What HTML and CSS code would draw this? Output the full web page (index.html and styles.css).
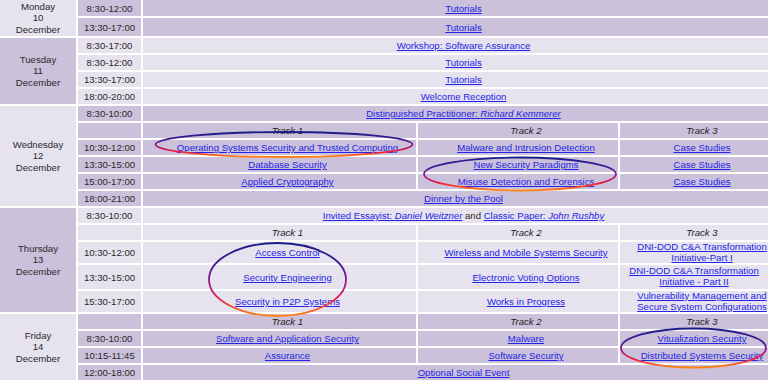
FILE: index.html
```html
<!DOCTYPE html>
<html>
<head>
<meta charset="utf-8">
<link rel="stylesheet" href="styles.css">
</head>
<body>
<div class="wrap">
  <div class="sched">
    <div class="cell day lt r-mon">Monday<br>10<br>December</div>
    <div class="cell time dk">8:30-12:00</div>
    <div class="cell full dk"><a href="#">Tutorials</a></div>
    <div class="cell time dk">13:30-17:00</div>
    <div class="cell full dk"><a href="#">Tutorials</a></div>

    <div class="cell day dk r-tue">Tuesday<br>11<br>December</div>
    <div class="cell time lt">8:30-17:00</div>
    <div class="cell full lt"><a href="#">Workshop: Software Assurance</a></div>
    <div class="cell time lt">8:30-12:00</div>
    <div class="cell full lt"><a href="#">Tutorials</a></div>
    <div class="cell time lt">13:30-17:00</div>
    <div class="cell full lt"><a href="#">Tutorials</a></div>
    <div class="cell time lt">18:00-20:00</div>
    <div class="cell full lt"><a href="#">Welcome Reception</a></div>

    <div class="cell day lt r-wed">Wednesday<br>12<br>December</div>
    <div class="cell time dk">8:30-10:00</div>
    <div class="cell full dk"><a href="#">Distinguished Practitioner: <i>Richard Kemmerer</i></a></div>
    <div class="cell time dk"></div>
    <div class="cell t1 dk track">Track 1</div>
    <div class="cell t2 dk track">Track 2</div>
    <div class="cell t3 dk track">Track 3</div>
    <div class="cell time dk">10:30-12:00</div>
    <div class="cell t1 dk"><a href="#">Operating Systems Security and Trusted Computing</a></div>
    <div class="cell t2 dk"><a href="#">Malware and Intrusion Detection</a></div>
    <div class="cell t3 dk"><a href="#">Case Studies</a></div>
    <div class="cell time dk">13:30-15:00</div>
    <div class="cell t1 dk"><a href="#">Database Security</a></div>
    <div class="cell t2 dk"><a href="#">New Security Paradigms</a></div>
    <div class="cell t3 dk"><a href="#">Case Studies</a></div>
    <div class="cell time dk">15:00-17:00</div>
    <div class="cell t1 dk"><a href="#">Applied Cryptography</a></div>
    <div class="cell t2 dk"><a href="#">Misuse Detection and Forensics</a></div>
    <div class="cell t3 dk"><a href="#">Case Studies</a></div>
    <div class="cell time dk">18:00-21:00</div>
    <div class="cell full dk"><a href="#">Dinner by the Pool</a></div>

    <div class="cell day dk r-thu">Thursday<br>13<br>December</div>
    <div class="cell time lt">8:30-10:00</div>
    <div class="cell full lt"><span><a href="#">Invited Essayist: <i>Daniel Weitzner</i></a> and <a href="#">Classic Paper: <i>John Rushby</i></a></span></div>
    <div class="cell time lt"></div>
    <div class="cell t1 lt track">Track 1</div>
    <div class="cell t2 lt track">Track 2</div>
    <div class="cell t3 lt track">Track 3</div>
    <div class="cell time lt">10:30-12:00</div>
    <div class="cell t1 lt"><a href="#">Access Control</a></div>
    <div class="cell t2 lt"><a href="#">Wireless and Mobile Systems Security</a></div>
    <div class="cell t3 lt two"><a href="#">DNI-DOD C&amp;A Transformation<br>Initiative-Part I</a></div>
    <div class="cell time lt">13:30-15:00</div>
    <div class="cell t1 lt"><a href="#">Security Engineering</a></div>
    <div class="cell t2 lt"><a href="#">Electronic Voting Options</a></div>
    <div class="cell t3 lt two nopad"><a href="#">DNI-DOD C&amp;A Transformation<br>Initiative - Part II</a></div>
    <div class="cell time lt">15:30-17:00</div>
    <div class="cell t1 lt"><a href="#">Security in P2P Systems</a></div>
    <div class="cell t2 lt"><a href="#">Works in Progress</a></div>
    <div class="cell t3 lt two"><a href="#">Vulnerability Management and<br>Secure System Configurations</a></div>

    <div class="cell day lt r-fri">Friday<br>14<br>December</div>
    <div class="cell time dk"></div>
    <div class="cell t1 dk track">Track 1</div>
    <div class="cell t2 dk track">Track 2</div>
    <div class="cell t3 dk track">Track 3</div>
    <div class="cell time dk">8:30-10:00</div>
    <div class="cell t1 dk"><a href="#">Software and Application Security</a></div>
    <div class="cell t2 dk"><a href="#">Malware</a></div>
    <div class="cell t3 dk"><a href="#">Vitualization Security</a></div>
    <div class="cell time dk">10:15-11:45</div>
    <div class="cell t1 dk"><a href="#">Assurance</a></div>
    <div class="cell t2 dk"><a href="#">Software Security</a></div>
    <div class="cell t3 dk"><a href="#">Distributed Systems Security</a></div>
    <div class="cell time dk">12:00-18:00</div>
    <div class="cell full dk"><a href="#">Optional Social Event</a></div>
  </div>

  <svg class="marks" width="770" height="382" viewBox="0 0 770 382">
    <defs>
      <linearGradient id="pen" x1="0" y1="0" x2="0" y2="1">
        <stop offset="0" stop-color="#1c1c88"/>
        <stop offset="0.35" stop-color="#4a1a96"/>
        <stop offset="0.55" stop-color="#9a1a86"/>
        <stop offset="0.78" stop-color="#ee1e40"/>
        <stop offset="1" stop-color="#ff8410"/>
      </linearGradient>
    </defs>
    <ellipse cx="284" cy="144.5" rx="128.5" ry="12.5"/>
    <ellipse cx="520" cy="174" rx="96" ry="16.5"/>
    <ellipse cx="277.5" cy="279.5" rx="68.5" ry="36.5"/>
    <ellipse cx="693.5" cy="348" rx="72.5" ry="19.5"/>
  </svg>
</div>
</body>
</html>
```

FILE: styles.css
```css
html, body {
  margin: 0;
  padding: 0;
  background: #ffffff;
}

body {
  font-family: "Liberation Sans", Arial, sans-serif;
  font-size: 9.6px;
  line-height: 11px;
  color: #2a2a2a;
}

.wrap {
  position: relative;
  width: 770px;
  height: 382px;
  overflow: hidden;
}

.sched {
  display: grid;
  grid-template-columns: 76px 63px 273px 200px 148px;
  grid-template-rows:
    16px 18px
    15px 15px 15px 15px
    15px 15px 15px 15px 15px 15px
    15px 15px 21px 24px 21px
    15px 15px 15px 15px;
  gap: 2px;
}

.cell {
  display: flex;
  align-items: center;
  justify-content: center;
  text-align: center;
  white-space: nowrap;
  overflow: visible;
}

.dk { background: #cbc1da; }
.lt { background: #e6e2ee; }

.day { grid-column: 1; }
.r-mon { grid-row: 1 / span 2; }
.r-tue { grid-row: 3 / span 4; }
.r-wed { grid-row: 7 / span 6; }
.r-thu { grid-row: 13 / span 5; }
.r-fri { grid-row: 18 / span 4; }

.day {
  line-height: 11.5px;
}

.time { grid-column: 2; }

.full {
  grid-column: 3 / span 3;
  padding-left: 16px;
}

.t1 { grid-column: 3; padding-left: 16px; }
.t2 { grid-column: 4; padding-left: 16px; }
.t3 { grid-column: 5; padding-left: 16px; }
.t3.nopad { padding-left: 0; }

.two {
  line-height: 10.6px;
}

.track {
  font-style: italic;
  color: #222222;
}

a {
  color: #2424e6;
  text-decoration: underline;
}

.marks {
  position: absolute;
  left: 0;
  top: 0;
  pointer-events: none;
}

.marks ellipse {
  fill: none;
  stroke: url(#pen);
  stroke-width: 1.8;
}
```
